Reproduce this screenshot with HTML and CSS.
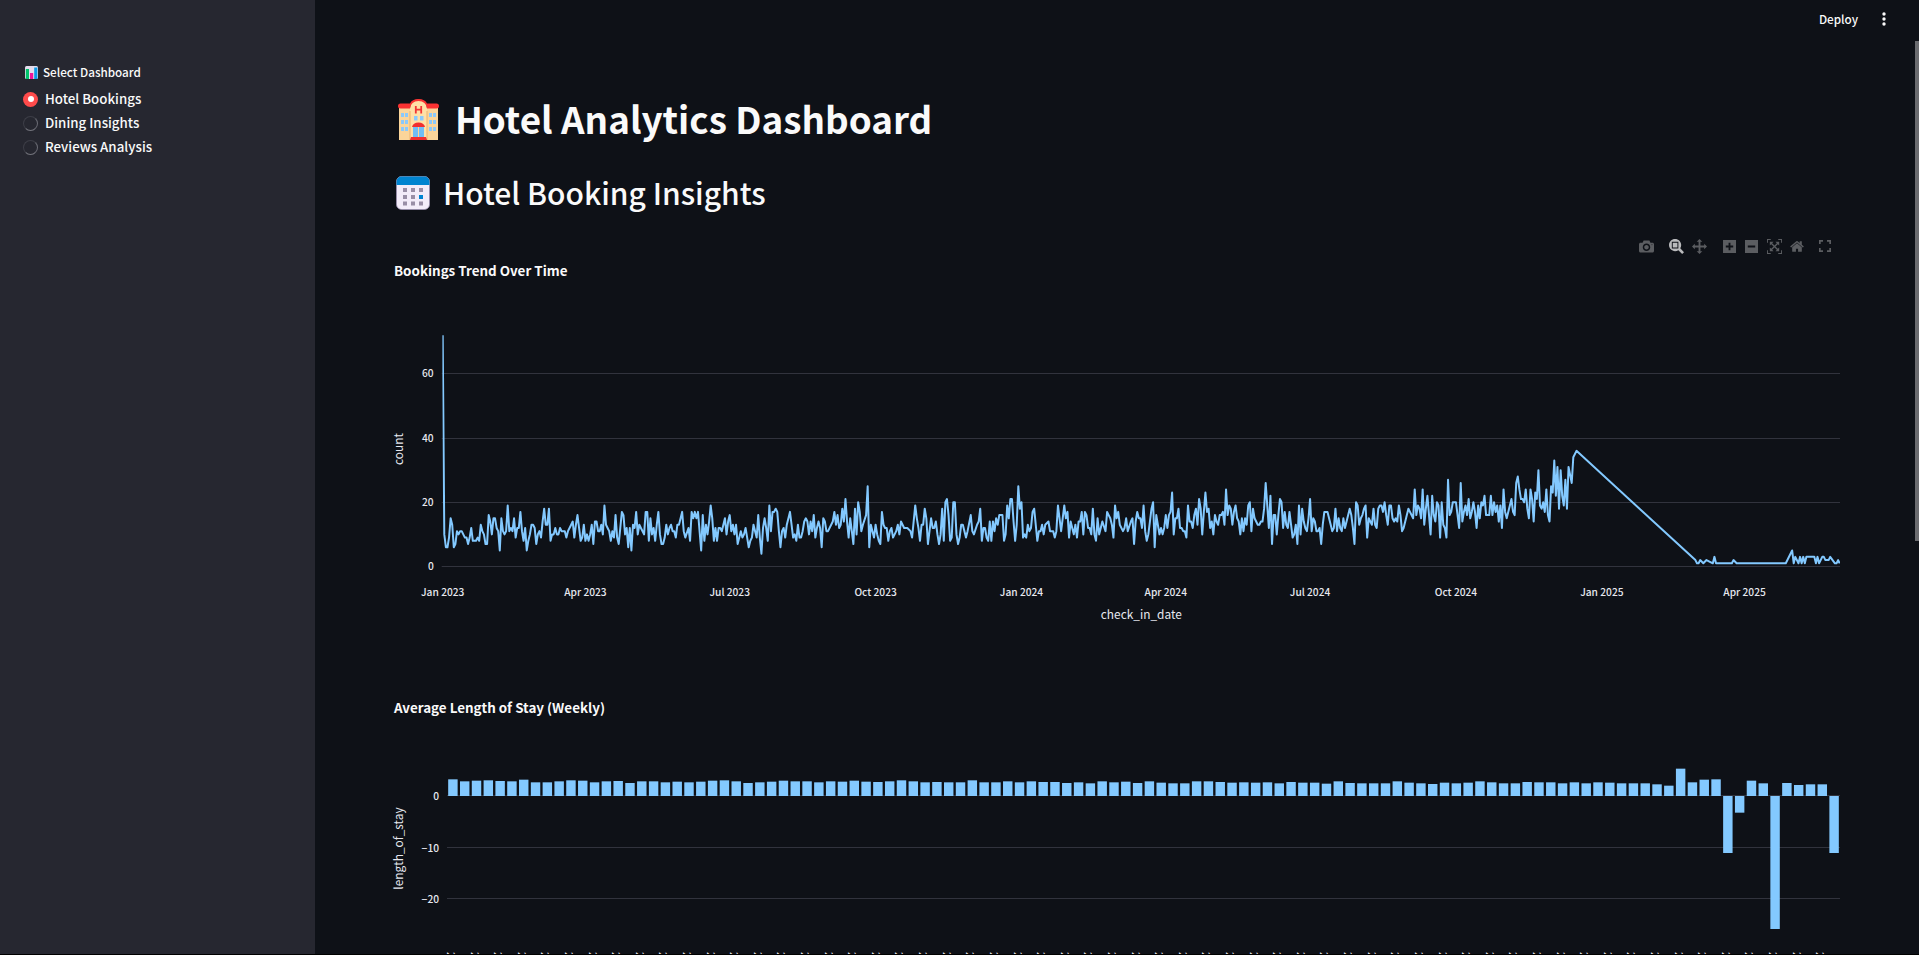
FILE: index.html
```html
<!DOCTYPE html>
<html lang="en">
<head>
<meta charset="utf-8">
<title>Hotel Analytics Dashboard</title>
<link rel="stylesheet" href="styles.css">
</head>
<body>
<div class="app">
  <aside class="sidebar">
    <div class="group-label">
      <svg class="chart-emoji" viewBox="0 0 13 13"><rect width="13" height="13" rx="1.5" fill="#e4dced"/><rect x="0.8" y="3" width="3.2" height="10" fill="#00c46b"/><rect x="5" y="7" width="3.2" height="6" fill="#f0149a"/><rect x="9.2" y="1.5" width="3.2" height="11.5" fill="#0a9bea"/></svg>
      <span>Select Dashboard</span>
    </div>
    <label class="option"><i class="radio radio-on"></i><span>Hotel Bookings</span></label>
    <label class="option"><i class="radio"></i><span>Dining Insights</span></label>
    <label class="option"><i class="radio"></i><span>Reviews Analysis</span></label>
  </aside>
  <main class="main">
    <header class="topbar">
      <span class="deploy">Deploy</span>
      <svg class="dots" viewBox="0 0 4 14"><circle cx="2" cy="2" r="1.7"/><circle cx="2" cy="7" r="1.7"/><circle cx="2" cy="12" r="1.7"/></svg>
    </header>
    <h1 class="title">
      <svg class="hotel-emoji" viewBox="0 0 41 41">
        <path d="M1 8h11v33H1zM29 8h11v33H29z" fill="#fbd59a"/>
        <path d="M12 9a8.500 8.500 0 0 1 17 0v32H12z" fill="#ffe0a6"/>
        <path d="M12 12v29M29 12v29" stroke="#efb26a" stroke-width="1"/>
        <path d="M2.500 4.500H12Q14 0 20.500 0T29 4.500h9.500q2.500 0 2.500 2.500t-2.500 2.500H29Q28 2 20.500 2T12 9.500H2.500Q0 9.500 0 7t2.500-2.500z" fill="#fa3131"/>
        <path d="M17.800 7v7.500M23.200 7v7.500M17.800 10.700h5.400" stroke="#f23636" stroke-width="1.800" fill="none"/>
        <path d="M3 14h3v4H3zM7 14h3v4H7zM3 21h3v4H3zM7 21h3v4H7zM3 28h3v4H3zM7 28h3v4H7zM31 14h3v4h-3zM35 14h3v4h-3zM31 21h3v4h-3zM35 21h3v4h-3zM31 28h3v4h-3zM35 28h3v4h-3zM16 17h3.500v4.500H16zM22 17h3.500v4.500H22z" fill="#8bc9fb"/>
        <path d="M15 28h11v10H15z" fill="#70bdf5"/>
        <path d="M20.500 28v10" stroke="#fbd59a" stroke-width="1"/>
        <path d="M14 28q1-4.500 6.500-4.500T27 28z" fill="#f02f2f"/>
        <path d="M13 38h15l1 3H12z" fill="#f02f2f"/>
      </svg>
      <span>Hotel Analytics Dashboard</span>
    </h1>
    <h2 class="subtitle">
      <svg class="cal-emoji" viewBox="0 0 34 34">
        <rect x=".5" y=".5" width="33" height="33" rx="5" fill="#f3ecf9" stroke="#9b8fae" stroke-width=".8"/>
        <path d="M.5 9V5.500a5 5 0 0 1 5-5h23a5 5 0 0 1 5 5V9z" fill="#0084d0"/>
        <path d="M7 12h4v4H7zM15 12h4v4h-4zM23 12h4v4h-4zM7 19h4v4H7zM15 19h4v4h-4zM7 25.500h4v4H7zM15 25.500h4v4h-4zM23 25.500h4v4h-4z" fill="#998ea6"/>
        <path d="M23 19h4v4h-4z" fill="#0084d0"/>
      </svg>
      <span>Hotel Booking Insights</span>
    </h2>
    <div class="toolbar">
      <svg class="tool t-camera" viewBox="0 0 1000 1000"><path transform="matrix(1 0 0 -1 0 850)" d="m500 450c-83 0-150-67-150-150 0-83 67-150 150-150 83 0 150 67 150 150 0 83-67 150-150 150z m400 150h-120c-16 0-34 13-39 29l-31 93c-6 15-23 28-40 28h-340c-16 0-34-13-39-28l-31-94c-6-15-23-28-40-28h-120c-55 0-100-45-100-100v-450c0-55 45-100 100-100h800c55 0 100 45 100 100v450c0 55-45 100-100 100z m-400-550c-138 0-250 112-250 250 0 138 112 250 250 250 138 0 250-112 250-250 0-138-112-250-250-250z m365 380c-19 0-35 16-35 35 0 19 16 35 35 35 19 0 35-16 35-35 0-19-16-35-35-35z"/></svg>
      <svg class="tool t-zoom" viewBox="0 0 1000 1000"><path transform="matrix(1 0 0 -1 0 850)" d="m1000-25l-250 251c40 63 63 138 63 218 0 224-182 406-407 406-224 0-406-182-406-406s183-406 407-406c80 0 155 22 218 62l250-250 125 125z m-812 250l0 438 437 0 0-438-437 0z m62 375l313 0 0-312-313 0 0 312z"/></svg>
      <svg class="tool t-pan" viewBox="0 0 1000 1000"><path transform="matrix(1 0 0 -1 0 850)" d="m1000 350l-187 188 0-125-250 0 0 250 125 0-188 187-187-187 125 0 0-250-250 0 0 125-188-188 186-187 0 125 252 0 0-250-125 0 187-188 188 188-125 0 0 250 250 0 0-126 187 188z"/></svg>
      <svg class="tool t-plus" viewBox="0 0 875 1000"><path transform="matrix(1 0 0 -1 0 850)" d="m1 787l0-875 875 0 0 875-875 0z m687-500l-187 0 0-187-125 0 0 187-188 0 0 125 188 0 0 187 125 0 0-187 187 0 0-125z"/></svg>
      <svg class="tool t-minus" viewBox="0 0 875 1000"><path transform="matrix(1 0 0 -1 0 850)" d="m0 788l0-876 876 0 0 876-876 0z m688-500l-500 0 0 125 500 0 0-125z"/></svg>
      <svg class="tool t-auto" viewBox="0 0 1000 1000"><path transform="matrix(1 0 0 -1 0 850)" d="m250 850l-187 0-63 0 0-62 0-188 63 0 0 188 187 0 0 62z m688 0l-188 0 0-62 188 0 0-188 62 0 0 188 0 62-62 0z m-875-938l0 188-63 0 0-188 0-62 63 0 187 0 0 62-187 0z m875 188l0-188-188 0 0-62 188 0 62 0 0 62 0 188-62 0z m-125 188l-1 0-93-94-156 156 156 156 92-93 2 0 0 250-250 0 0-2 93-92-156-156-156 156 94 92 0 2-250 0 0-250 0 0 93 93 157-156-157-156-93 94 0 0 0-250 250 0 0 0-94 93 156 157 156-157-93-93 0 0 250 0 0 250z"/></svg>
      <svg class="tool t-home" viewBox="0 0 928 1000"><path transform="matrix(1 0 0 -1 0 850)" d="m786 296v-267q0-15-11-26t-25-10h-214v214h-143v-214h-214q-15 0-25 10t-11 26v267q0 1 0 2t0 2l321 264 321-264q1-1 1-4z m124 39l-34-41q-5-5-12-6h-2q-7 0-12 3l-386 322-386-322q-7-4-13-4-7 2-12 7l-35 41q-4 5-3 13t6 12l401 334q18 15 42 15t43-15l136-114v109q0 8 5 13t13 5h107q8 0 13-5t5-13v-227l122-102q5-5 6-12t-4-13z"/></svg>
      <svg class="tool t-full" viewBox="0 0 12 12"><path d="M0 4V0h4v1.700H1.700V4zM8 0h4v4h-1.700V1.700H8zM0 8h1.700v2.300H4V12H0zM10.300 8H12v4H8v-1.700h2.300z"/></svg>
    </div>
    <section class="panel">
      <h3 class="chart-title">Bookings Trend Over Time</h3>
      <svg class="chart" id="trend" width="1447" height="340"></svg>
    </section>
    <section class="panel">
      <h3 class="chart-title">Average Length of Stay (Weekly)</h3>
      <svg class="chart" id="stay" width="1447" height="233"></svg>
    </section>
  </main>
  <div class="scrollbar"></div>
  <div class="bottom-edge"></div>
</div>
<script src="app.js"></script>
</body>
</html>
```
FILE: styles.css
```css
* { box-sizing: border-box; }
body {
  margin: 0;
  background: #0e1117;
  color: #fafafa;
  font-family: "Noto Sans CJK SC", "Noto Sans", sans-serif;
  overflow: hidden;
}
.app { display: flex; height: 955px; overflow: hidden; position: relative; }
.sidebar { width: 315px; flex: none; background: #262730; padding: 60px 0 0 23px; }
.group-label { display: flex; align-items: center; height: 24px; gap: 5px; padding-left: 2px; font-size: 11.7px; font-weight: 500; margin-bottom: 3px; }
.chart-emoji { width: 13px; height: 13px; }
.option { display: flex; align-items: center; height: 24px; gap: 7px; font-size: 13.3px; font-weight: 500; }
.group-label span, .option span { padding-bottom: 2px; }
.radio { width: 15px; height: 15px; border-radius: 50%; background: #262730; border: 1px solid; border-color: #3d3e47 #6a6b74 #74757d #3d3e47; }
.radio-on { background: #ff4b4b; border: 0; display: grid; place-items: center; }
.radio-on::after { content: ""; width: 6px; height: 6px; border-radius: 50%; background: #fff; }
.main { flex: 1; padding-left: 78px; overflow: hidden; }
.topbar { height: 38px; display: flex; justify-content: flex-end; align-items: center; gap: 24px; padding-right: 33px; font-size: 11.7px; font-weight: 500; }
.deploy { padding-bottom: 2px; }
.dots { width: 4px; height: 14px; fill: #fafafa; }
.title, .subtitle, .chart-title { margin: 0; white-space: nowrap; display: flex; align-items: center; }
.title { height: 60px; margin-top: 51px; padding-left: 5px; gap: 16px; font-size: 36.8px; font-weight: 700; line-height: 58px; }
.title span, .subtitle span { padding-bottom: 2px; }
.hotel-emoji { width: 41px; height: 41px; }
.subtitle { height: 48px; margin-top: 20px; padding-left: 3px; gap: 13px; font-size: 30px; font-weight: 500; line-height: 46px; }
.cal-emoji { width: 34px; height: 34px; }
.toolbar { display: flex; align-items: center; height: 16px; margin-top: 21px; margin-bottom: 1px; padding-left: 1246px; }
.tool { height: 15px; width: 15px; fill: #5b5d61; flex: none; }
.t-zoom { margin-left: 15px; fill: #b9babc; }
.t-pan { margin-left: 8px; }
.t-plus { width: 13px; margin-left: 16px; }
.t-minus { width: 13px; margin-left: 9px; }
.t-auto { margin-left: 9px; }
.t-home { width: 14px; margin-left: 8px; }
.t-full { width: 12px; height: 12px; margin-left: 15px; }
.panel { height: 437px; }
.chart-title { height: 30px; padding-left: 1px; font-size: 13.4px; font-weight: 700; }
.chart { display: block; margin-top: 22px; overflow: visible; font-family: inherit; }
.grid { stroke: #31333d; stroke-width: 1; }
.line { fill: none; stroke: #83c9ff; stroke-width: 2; stroke-linejoin: round; }
.bar { fill: #83c9ff; }
.tick { fill: #e6e8ef; font-size: 10.2px; font-weight: 500; }
.axis-name { fill: #e6e8ef; font-size: 11.9px; }
.scrollbar { position: absolute; right: 0; top: 41px; width: 4px; height: 500px; background: #6b6c70; }
.bottom-edge { position: absolute; left: 0; right: 0; bottom: 0; height: 1px; background: #000; }
```
FILE: app.js
```js
const NS = "http://www.w3.org/2000/svg";
function add(parent, tag, attrs, text) {
  const el = document.createElementNS(NS, tag);
  for (const k in attrs) el.setAttribute(k, attrs[k]);
  if (text !== undefined) el.textContent = text;
  parent.appendChild(el);
  return el;
}

// Booking counts: position:count pairs, three units per pixel, in four runs.
const runs = [
  [0, 189, "189:72 193:10 197:6 203:6 207:9 211:15 216:13 221:6 226:7 230:11 235:10 239:11 245:11 250:10 256:9 260:9 264:7 269:9 273:12 278:8 288:8 292:9 297:8 302:13 307:11 311:10 316:7 321:7 326:16 331:14 335:10 340:15 345:15 350:12 354:11 359:5 364:15 368:11 373:10 378:11 383:19 388:11 392:12 397:11 402:15 407:9 411:12 416:12 421:17 425:11 430:8 435:12 440:5 445:8 450:10 454:13 459:13 464:12 468:7 473:10 478:11 483:9 488:14 492:18 497:13 502:13 506:18 511:8 516:10 521:10 525:12 530:10 535:10 540:12 545:11 554:11 559:9 563:11 568:12 577:14 583:9 588:13 592:16 597:12 602:8 607:9 611:13 616:8 621:10 626:8 630:10 635:13 640:7 644:14 649:14 654:11 659:11 664:13 668:10 673:19 678:13 683:12 687:11 692:8 697:11 701:9 706:16 711:9 716:7 721:12 725:17 730:16 735:10 739:12 744:6 749:12 754:5 759:13 764:12 768:17 773:10 778:13 783:12 792:10 797:17 802:17 807:8 811:15 816:10 820:12 825:8 830:13 835:17 840:10 845:7 849:7 854:9 859:13 864:10 868:12 873:13 878:11 883:11 887:9 892:13 897:13 907:17 911:11 916:9 925:12 930:8 935:17 940:15 945:17 949:15 954:17 959:11 963:5 968:16 973:8 978:13 983:10 987:14 992:19 997:15 1002:8 1007:12 1011:8 1016:12 1021:12 1026:11 1035:15 1040:10 1045:14 1049:16 1054:11 1059:13 1064:10 1068:13 1074:7 1083:11 1088:9 1093:10 1098:12 1102:9 1107:6"],
  [1080, 189, "31:8 36:9 40:13 45:11 50:9 55:16 60:9 64:4 69:12 74:15 79:12 83:8 88:19 93:11 98:17 102:17 107:18 112:17 117:11 121:6 126:11 131:12 136:9 140:13 150:17 155:13 159:9 164:10 168:8 173:13 178:9 183:9 188:11 193:14 197:15 202:14 207:10 211:14 216:11 221:16 226:9 231:12 236:14 240:12 245:6 250:15 254:14 260:11 265:11 278:14 283:17 288:13 292:16 297:12 302:13 307:18 311:14 316:21 321:14 326:9 330:15 335:11 340:7 345:18 350:10 354:20 359:17 364:11 369:13 378:16 383:25 388:6 392:13 397:11 402:9 407:13 412:10 416:8 420:7 426:17 431:13 435:12 440:12 445:8 450:11 454:12 459:9 464:10 469:11 473:13 478:10 483:14 493:12 502:12 511:11 516:9 526:19 531:15 535:12 540:8 545:13 549:13 554:18 559:15 564:7 569:11 573:15 578:12 583:12 588:14 592:10 597:7 602:10 607:18 612:8 616:20 621:21 626:16 631:8 635:9 640:20 645:20 650:10 655:7 659:9 664:13 669:13 678:9 683:11 692:16 697:11 702:10 711:13 716:14 721:18 726:8 731:12 735:12 740:9 745:8 750:14 754:8 759:14 764:11 769:15 773:13 778:16 788:16 793:8 797:10 802:19 807:15 811:21 816:21 821:14 826:8 830:13 835:25 840:18 845:20 850:9 854:10 859:9 864:13 869:11 873:12 878:17 883:18 888:13 893:8 897:11 902:11 907:13 912:10 916:13 926:14 931:11 940:11 945:9 950:11 954:19 959:15 964:11 969:15 973:19 978:15 983:17 988:9 992:14 997:12 1002:10 1007:13 1011:9 1016:14 1021:14 1026:17 1031:10 1035:17 1040:16 1045:12 1050:12 1054:10 1059:18 1064:10 1068:8 1073:15 1078:10 1083:12 1088:14 1097:11 1102:17 1107:16"],
  [2160, 189, "31:15 36:13 40:9 45:19 50:15 55:17 60:13 69:11 74:12 79:15 84:11 93:14 98:15 103:7 107:14 112:17 117:15 122:15 126:12 131:19 136:11 141:8 146:10 151:14 155:18 160:20 165:6 169:16 174:13 179:10 184:12 189:10 193:12 198:16 203:12 208:16 212:17 217:23 222:10 227:15 231:15 236:18 241:12 246:12 251:11 255:11 260:9 265:19 270:14 275:14 279:12 284:16 289:18 293:13 298:21 303:18 308:10 312:17 317:23 322:17 327:18 331:12 336:14 341:10 346:16 350:14 355:13 360:16 365:16 370:17 374:13 379:24 384:16 389:19 393:18 398:13 403:17 408:19 412:15 417:14 422:10 427:15 431:11 436:15 441:13 446:19 450:20 455:11 460:18 465:15 474:13 479:13 484:14 489:14 493:18 498:26 503:19 508:12 512:22 517:7 522:16 527:16 531:10 536:16 541:21 546:20 551:12 555:17 560:13 565:12 570:17 574:13 579:9 584:10 589:13 593:7 598:19 603:10 608:18 613:14 617:12 622:11 627:15 631:21 636:11 641:15 646:14 651:11 655:11 660:12 665:7 670:13 674:17 684:17 693:13 698:11 703:12 708:18 712:11 717:15 722:12 727:11 732:15 736:12 750:18 755:16 760:12 765:7 770:20 775:19 780:13 784:15 789:16 794:18 798:19 803:9 808:15 813:14 817:13 822:18 827:13 832:12 836:18 841:19 846:19 851:17 855:20 860:16 865:13 870:19 874:19 879:15 884:14 889:15 893:14 898:19 903:16 908:11 913:12 927:18 932:17 941:15 946:24 951:16 955:19 960:18 965:15 969:24 974:13 979:18 984:22 989:16 993:10 998:22 1003:16 1008:14 1013:20 1017:19 1022:9 1027:20 1032:13 1036:12 1041:9 1046:27 1050:16 1055:17 1060:20 1069:20 1074:16 1079:12"],
  [3240, 189, "3:26 8:14 13:17 18:19 23:16 27:21 32:15 37:17 42:20 47:17 51:12 56:19 60:15 65:20 70:19 75:22 80:16 90:16 94:22 99:16 104:20 108:17 113:19 118:14 122:19 127:12 132:24 137:17 141:15 156:21 161:17 165:16 170:26 175:28 180:24 184:21 189:21 194:20 199:24 203:18 208:15 213:24 218:21 222:14 227:23 232:21 237:30 242:19 246:18 251:20 256:17 261:24 265:16 270:14 275:25 280:23 285:33 289:22 294:31 299:18 304:30 309:22 313:19 318:27 323:18 327:31 337:26 342:34 351:36 708:2 713:1 718:1 722:2 732:1 741:2 760:1 765:3 770:1 817:1 822:2 832:1 979:1 998:5 1003:1 1008:3 1017:1 1022:3 1027:1 1032:3 1036:1 1041:3 1065:3 1070:1 1075:3 1080:1 1089:3 1094:3 1099:2 1108:2 1113:3 1127:1 1132:1 1136:2 1140:1"]
];
const DAY = 1.5857;

const trend = document.getElementById("trend");
const topOffset = trend.getBoundingClientRect().top;
const leftOffset = trend.getBoundingClientRect().left;
const X0 = 442.7 - leftOffset, Y0 = 566.5 - topOffset, U = 3.2125, RIGHT = 1840 - leftOffset;
[0, 20, 40, 60].forEach(v => {
  const y = Math.floor(Y0 - v * U) + .5;
  add(trend, "line", { class: "grid", x1: X0 - 1, x2: RIGHT, y1: y, y2: y });
  add(trend, "text", { class: "tick", x: X0 - 9, y: y + 3.500, "text-anchor": "end" }, v);
});
const pts = [];
runs.forEach(([base, origin, list]) => list.split(" ").forEach(p => {
  const [a, v] = p.split(":").map(Number);
  const day = Math.round((base + a - origin) / 3 / DAY);
  pts.push((X0 + day * DAY).toFixed(2) + "," + (Y0 - v * U).toFixed(2));
}));
const clip = add(add(trend, "defs", {}), "clipPath", { id: "plot" });
add(clip, "rect", { x: X0 - .3, y: 0, width: RIGHT - X0 + .3, height: 300 });
add(trend, "polyline", { class: "line", points: pts.join(" "), "clip-path": "url(#plot)" });
[["Jan 2023", 0], ["Apr 2023", 90], ["Jul 2023", 181], ["Oct 2023", 273], ["Jan 2024", 365], ["Apr 2024", 456], ["Jul 2024", 547], ["Oct 2024", 639], ["Jan 2025", 731], ["Apr 2025", 821]].forEach(([t, d]) =>
  add(trend, "text", { class: "tick", x: X0 + d * DAY, y: Y0 + 29.500, "text-anchor": "middle" }, t));
add(trend, "text", { class: "axis-name", x: (X0 + RIGHT) / 2, y: Y0 + 52.500, "text-anchor": "middle" }, "check_in_date");
add(trend, "text", { class: "axis-name", transform: `translate(9.500 ${Y0 - 117.500}) rotate(-90)`, "text-anchor": "middle" }, "count");

// Weekly averages: height of each bar in thirds of a pixel above the zero line.
const weeks = [50,44,46,47,45,44,49,41,41,44,47,46,41,44,45,39,44,44,41,43,41,43,46,47,44,39,41,43,46,44,44,41,44,43,46,43,42,
  44,47,44,41,42,41,41,47,41,41,44,41,44,42,42,39,41,38,44,41,43,39,44,40,38,38,44,44,42,40,41,40,41,38,42,40,40,37,44,39,38,38,
  38,44,40,38,36,40,38,40,44,41,38,38,42,41,41,38,41,38,41,40,38,38,38,35,31,82,41,49,50,-171,-50,46,38,-399,39,33,35,35,-171];
const stay = document.getElementById("stay");
const sTop = stay.getBoundingClientRect().top;
const SX = 447 - leftOffset, SY = 796 - sTop, STEP = (RIGHT - SX) / weeks.length;
[0, -10, -20].forEach(v => {
  const y = Math.floor(SY - v * -5.1 * -1) + (v ? .5 : -.5);
  add(stay, "line", { class: "grid", x1: SX, x2: RIGHT, y1: y, y2: y });
  add(stay, "text", { class: "tick", x: SX - 8, y: y + 4, "text-anchor": "end" }, String(v).replace("-", "\u2212"));
});
const start = Date.UTC(2022, 11, 26);
const iso = t => new Date(t).toISOString().slice(0, 10);
weeks.forEach((w, i) => {
  const h = Math.abs(w) / 3;
  add(stay, "rect", { class: "bar", x: SX + STEP * (i + .1), y: w > 0 ? SY - h : SY, width: STEP * .8, height: h });
  if (i % 2 === 0) {
    const t = start + i * 7 * 864e5;
    add(stay, "text", { class: "tick", transform: `translate(${SX + STEP * (i + .5) - 6} ${952 - sTop}) rotate(90)` }, iso(t) + "/" + iso(t + 6 * 864e5));
  }
});
add(stay, "text", { class: "axis-name", transform: `translate(9.500 ${848.500 - sTop}) rotate(-90)`, "text-anchor": "middle" }, "length_of_stay");
```
